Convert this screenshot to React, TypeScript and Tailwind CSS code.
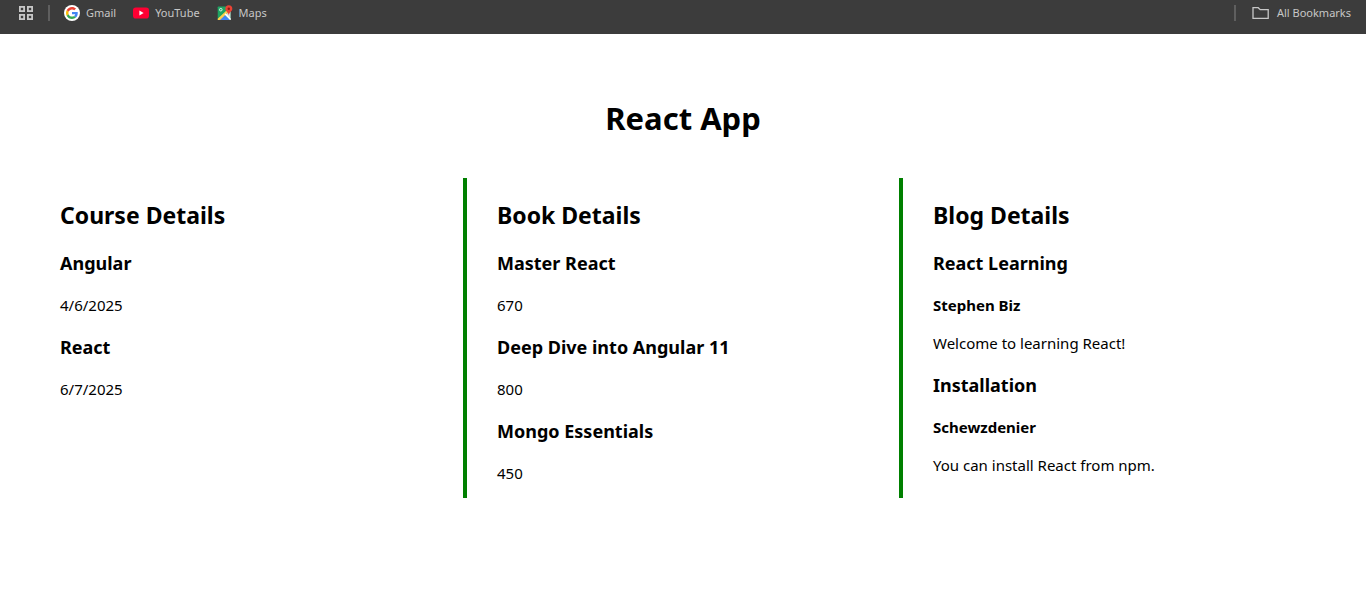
const link = "flex items-center text-[11px] leading-4 text-[#c7c7c7]";

function AppsIcon() {
  return (
    <svg width="16" height="16" viewBox="0 0 16 16" fill="none" stroke="#c7c7c7" strokeWidth="1.800">
      <rect x="1.900" y="1.900" width="4.200" height="4.200" />
      <rect x="9.900" y="1.900" width="4.200" height="4.200" />
      <rect x="1.900" y="9.900" width="4.200" height="4.200" />
      <rect x="9.900" y="9.900" width="4.200" height="4.200" />
    </svg>
  );
}

function GoogleIcon() {
  return (
    <svg width="16" height="16" viewBox="0 0 48 48">
      <circle cx="24" cy="24" r="24" fill="#fff" />
      <g transform="translate(6 6) scale(0.75)">
        <path fill="#EA4335" d="M24 9.5c3.54 0 6.71 1.22 9.21 3.6l6.85-6.85C35.9 2.38 30.47 0 24 0 14.62 0 6.51 5.38 2.56 13.22l7.98 6.19C12.43 13.72 17.74 9.5 24 9.5z" />
        <path fill="#4285F4" d="M46.98 24.55c0-1.57-.15-3.09-.38-4.55H24v9.02h12.94c-.58 2.96-2.26 5.48-4.78 7.18l7.73 6c4.51-4.18 7.09-10.36 7.09-17.65z" />
        <path fill="#FBBC05" d="M10.53 28.59c-.48-1.45-.76-2.99-.76-4.59s.27-3.14.76-4.59l-7.98-6.19C.92 16.46 0 20.12 0 24c0 3.88.92 7.54 2.56 10.78l7.97-6.19z" />
        <path fill="#34A853" d="M24 48c6.48 0 11.93-2.13 15.89-5.81l-7.73-6c-2.15 1.45-4.92 2.3-8.16 2.3-6.26 0-11.57-4.22-13.47-9.91l-7.98 6.19C6.51 42.62 14.62 48 24 48z" />
      </g>
    </svg>
  );
}

function YouTubeIcon() {
  return (
    <svg width="16" height="16" viewBox="0 0 16 16">
      <rect y="2.5" width="16" height="11" rx="2.8" fill="#ff0033" />
      <path d="M6.4 5.6v4.8L10.6 8z" fill="#fff" />
    </svg>
  );
}

function MapsIcon() {
  return (
    <svg width="16" height="16" viewBox="0 0 16 16">
      <rect x="0.700" y="1.500" width="12.800" height="13.500" rx="0.800" fill="#1fa463" />
      <path d="M13.500 6v9L8.500 9.500z" fill="#dadce0" />
      <path d="M1.600 15 7.500 9.400l5.500 5.600z" fill="#4285f4" />
      <path d="M.7 13.800 9.500 5.600l1.600 1.700L3 15H1.300a.6.6 0 0 1-.6-.6z" fill="#ffd04b" />
      <path d="M7.500 9.400 8.600 8.300l5 5.200v1.500H13z" fill="#fff" />
      <circle cx="3.800" cy="4.700" r="1.300" fill="none" stroke="#fff" strokeWidth="0.800" />
      <path d="M11.800.3A3.500 3.500 0 0 0 8.300 3.800c0 2.600 2.900 3.100 3.500 6.400.6-3.300 3.500-3.800 3.500-6.400A3.500 3.500 0 0 0 11.800.3z" fill="#ea4335" />
      <circle cx="11.800" cy="3.800" r="1.200" fill="#8c1a12" />
    </svg>
  );
}

function FolderIcon() {
  return (
    <svg width="18" height="16" viewBox="0 0 18 16" fill="none" stroke="#c7c7c7" strokeWidth="1.3">
      <path d="M1 2.700h5.200l2 2h8v8.700H1z" />
    </svg>
  );
}

function BookmarksBar() {
  return (
    <nav aria-label="Bookmarks" className="flex h-[34px] items-start justify-between bg-[#3c3c3c] pr-[15px] pl-[18px] pt-[5px] font-['Noto_Sans',sans-serif]">
      <div className="flex items-center">
        <button type="button" aria-label="Apps"><AppsIcon /></button>
        <span className="ml-[14px] h-4 w-[2px] bg-[#5f5f5f]" />
        <div className="ml-[14px] flex items-center gap-[17px]">
          <a href="#gmail" className={`${link} gap-[6px]`}><GoogleIcon />Gmail</a>
          <a href="#youtube" className={`${link} gap-[6px]`}><YouTubeIcon />YouTube</a>
          <a href="#maps" className={`${link} gap-[6px]`}><MapsIcon />Maps</a>
        </div>
      </div>
      <div className="flex items-center">
        <span className="mr-4 h-4 w-[2px] bg-[#5f5f5f]" />
        <button type="button" className={`${link} gap-[7px]`}><FolderIcon />All Bookmarks</button>
      </div>
    </nav>
  );
}

const courses = [
  { name: "Angular", date: "4/6/2025" },
  { name: "React", date: "6/7/2025" },
];
const books = [
  { name: "Master React", price: 670 },
  { name: "Deep Dive into Angular 11", price: 800 },
  { name: "Mongo Essentials", price: 450 },
];
const blogs = [
  { title: "React Learning", author: "Stephen Biz", text: "Welcome to learning React!" },
  { title: "Installation", author: "Schewzdenier", text: "You can install React from npm." },
];

const h2 = "text-[23px] leading-[33px] font-bold";
const h3 = "text-lg leading-[25px] font-bold";
const item = "mt-[19px] leading-[21px]";

export default function App() {
  return (
    <div className="min-h-screen bg-white font-['Noto_Sans',sans-serif] text-[15px] text-black">
      <BookmarksBar />
      <main className="pt-16">
        <h1 className="text-center text-[31px] leading-10 font-bold">React App</h1>
        <div className="mt-10 grid grid-cols-[463fr_436fr_467fr]">
          <section className="pt-[21px] pl-[60px]">
            <h2 className={h2}>Course Details</h2>
            {courses.map((c) => (
              <div key={c.name} className={item}>
                <h3 className={h3}>{c.name}</h3>
                <p className="mt-[19px]">{c.date}</p>
              </div>
            ))}
          </section>
          <section className="border-l-4 border-[#008000] pt-[21px] pb-[14px] pl-[30px]">
            <h2 className={h2}>Book Details</h2>
            {books.map((b) => (
              <div key={b.name} className={item}>
                <h3 className={h3}>{b.name}</h3>
                <p className="mt-[19px]">{b.price}</p>
              </div>
            ))}
          </section>
          <section className="border-l-4 border-[#008000] pt-[21px] pl-[30px]">
            <h2 className={h2}>Blog Details</h2>
            {blogs.map((b) => (
              <div key={b.title} className={item}>
                <h3 className={h3}>{b.title}</h3>
                <h4 className="mt-[19px] font-bold">{b.author}</h4>
                <p className="mt-[17px]">{b.text}</p>
              </div>
            ))}
          </section>
        </div>
      </main>
    </div>
  );
}
